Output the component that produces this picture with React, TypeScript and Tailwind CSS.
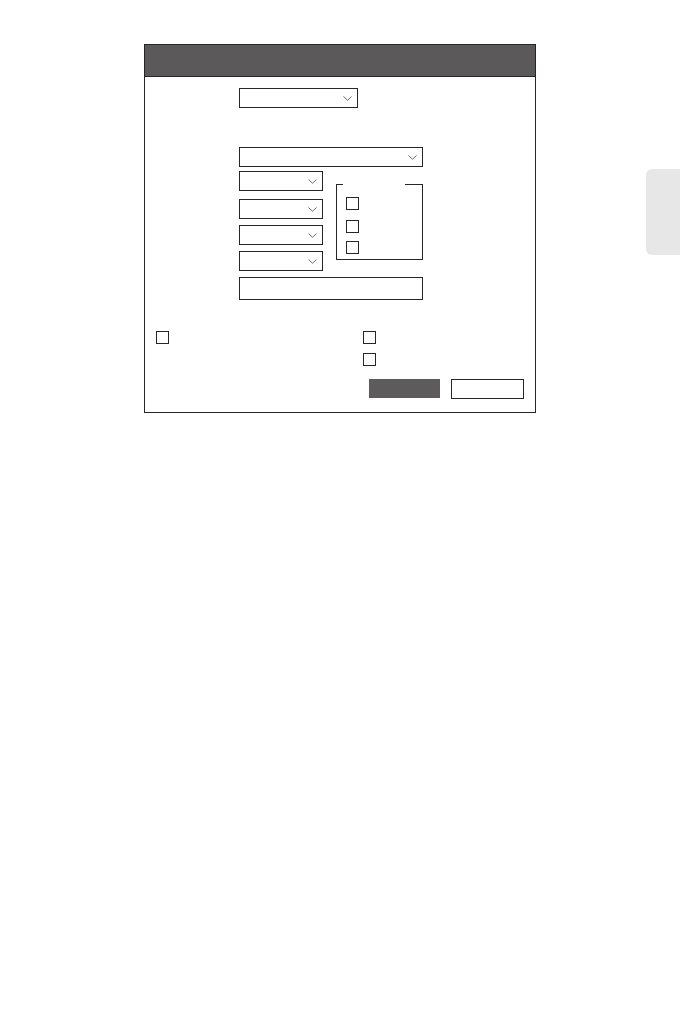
import React from 'react';

function Chevron() {
  return (
    <svg width="9" height="5" viewBox="0 0 9 5" className="shrink-0">
      <polyline points="0.5,0.5 4.5,4.3 8.5,0.5" fill="none" stroke="#6b6b6b" strokeWidth="1" />
    </svg>
  );
}

function Select({ className }: { className: string }) {
  return (
    <div className={`flex items-center justify-end border border-[#262626] bg-white pr-[5px] ${className}`}>
      <Chevron />
    </div>
  );
}

function Box({ className = '' }: { className?: string }) {
  return <div className={`h-[13px] w-[13px] border border-[#262626] bg-white ${className}`} />;
}

export default function App() {
  return (
    <div className="flex min-h-[1020px] w-[680px] bg-white pl-[144px] pt-[44px] font-['Liberation_Sans',sans-serif]">
      <div className="flex h-[369px] w-[392px] flex-col border border-[#262626]">
        {/* header */}
        <div className="h-[32px] border-b border-[#262626] bg-[#5b5959]" />

        {/* body */}
        <div className="flex flex-col pl-[94px] pt-[11px]">
          <Select className="h-[20px] w-[119px]" />
          <Select className="mt-[39px] h-[20px] w-[184px]" />

          <div className="mt-[4px] flex">
            <div className="flex flex-col">
              <Select className="h-[20px] w-[84px]" />
              <Select className="mt-[8px] h-[20px] w-[84px]" />
              <Select className="mt-[6px] h-[20px] w-[84px]" />
              <Select className="mt-[6px] h-[20px] w-[84px]" />
            </div>

            {/* group box with empty legend gap */}
            <div className="ml-[13px] mt-[13px] flex h-[76px] w-[87px] flex-col border-x border-b border-[#262626]">
              <div className="-mx-px flex h-px">
                <div className="w-[7px] bg-[#262626]" />
                <div className="flex-1" />
                <div className="w-[18px] bg-[#262626]" />
              </div>
              <div className="flex flex-col pl-[9px] pt-[12px]">
                <Box />
                <Box className="mt-[10px]" />
                <Box className="mt-[8px]" />
              </div>
            </div>
          </div>

          <div className="mt-[6px] h-[23px] w-[184px] border border-[#262626]" />
        </div>

        {/* checkboxes */}
        <div className="mt-[31px] flex pl-[11px]">
          <div className="w-[207px]">
            <Box />
          </div>
          <div className="flex flex-col">
            <Box />
            <Box className="mt-[9px]" />
          </div>
        </div>

        {/* buttons */}
        <div className="mt-[13px] flex justify-end gap-[11px] pr-[11px]">
          <div className="h-[19px] w-[71px] bg-[#5d5b5b]" />
          <div className="h-[20px] w-[73px] border border-[#262626]" />
        </div>
      </div>

      <div className="ml-auto mt-[125px] h-[86px] w-[34px] rounded-l-[6px] bg-[#e7e7e7]" />
    </div>
  );
}
